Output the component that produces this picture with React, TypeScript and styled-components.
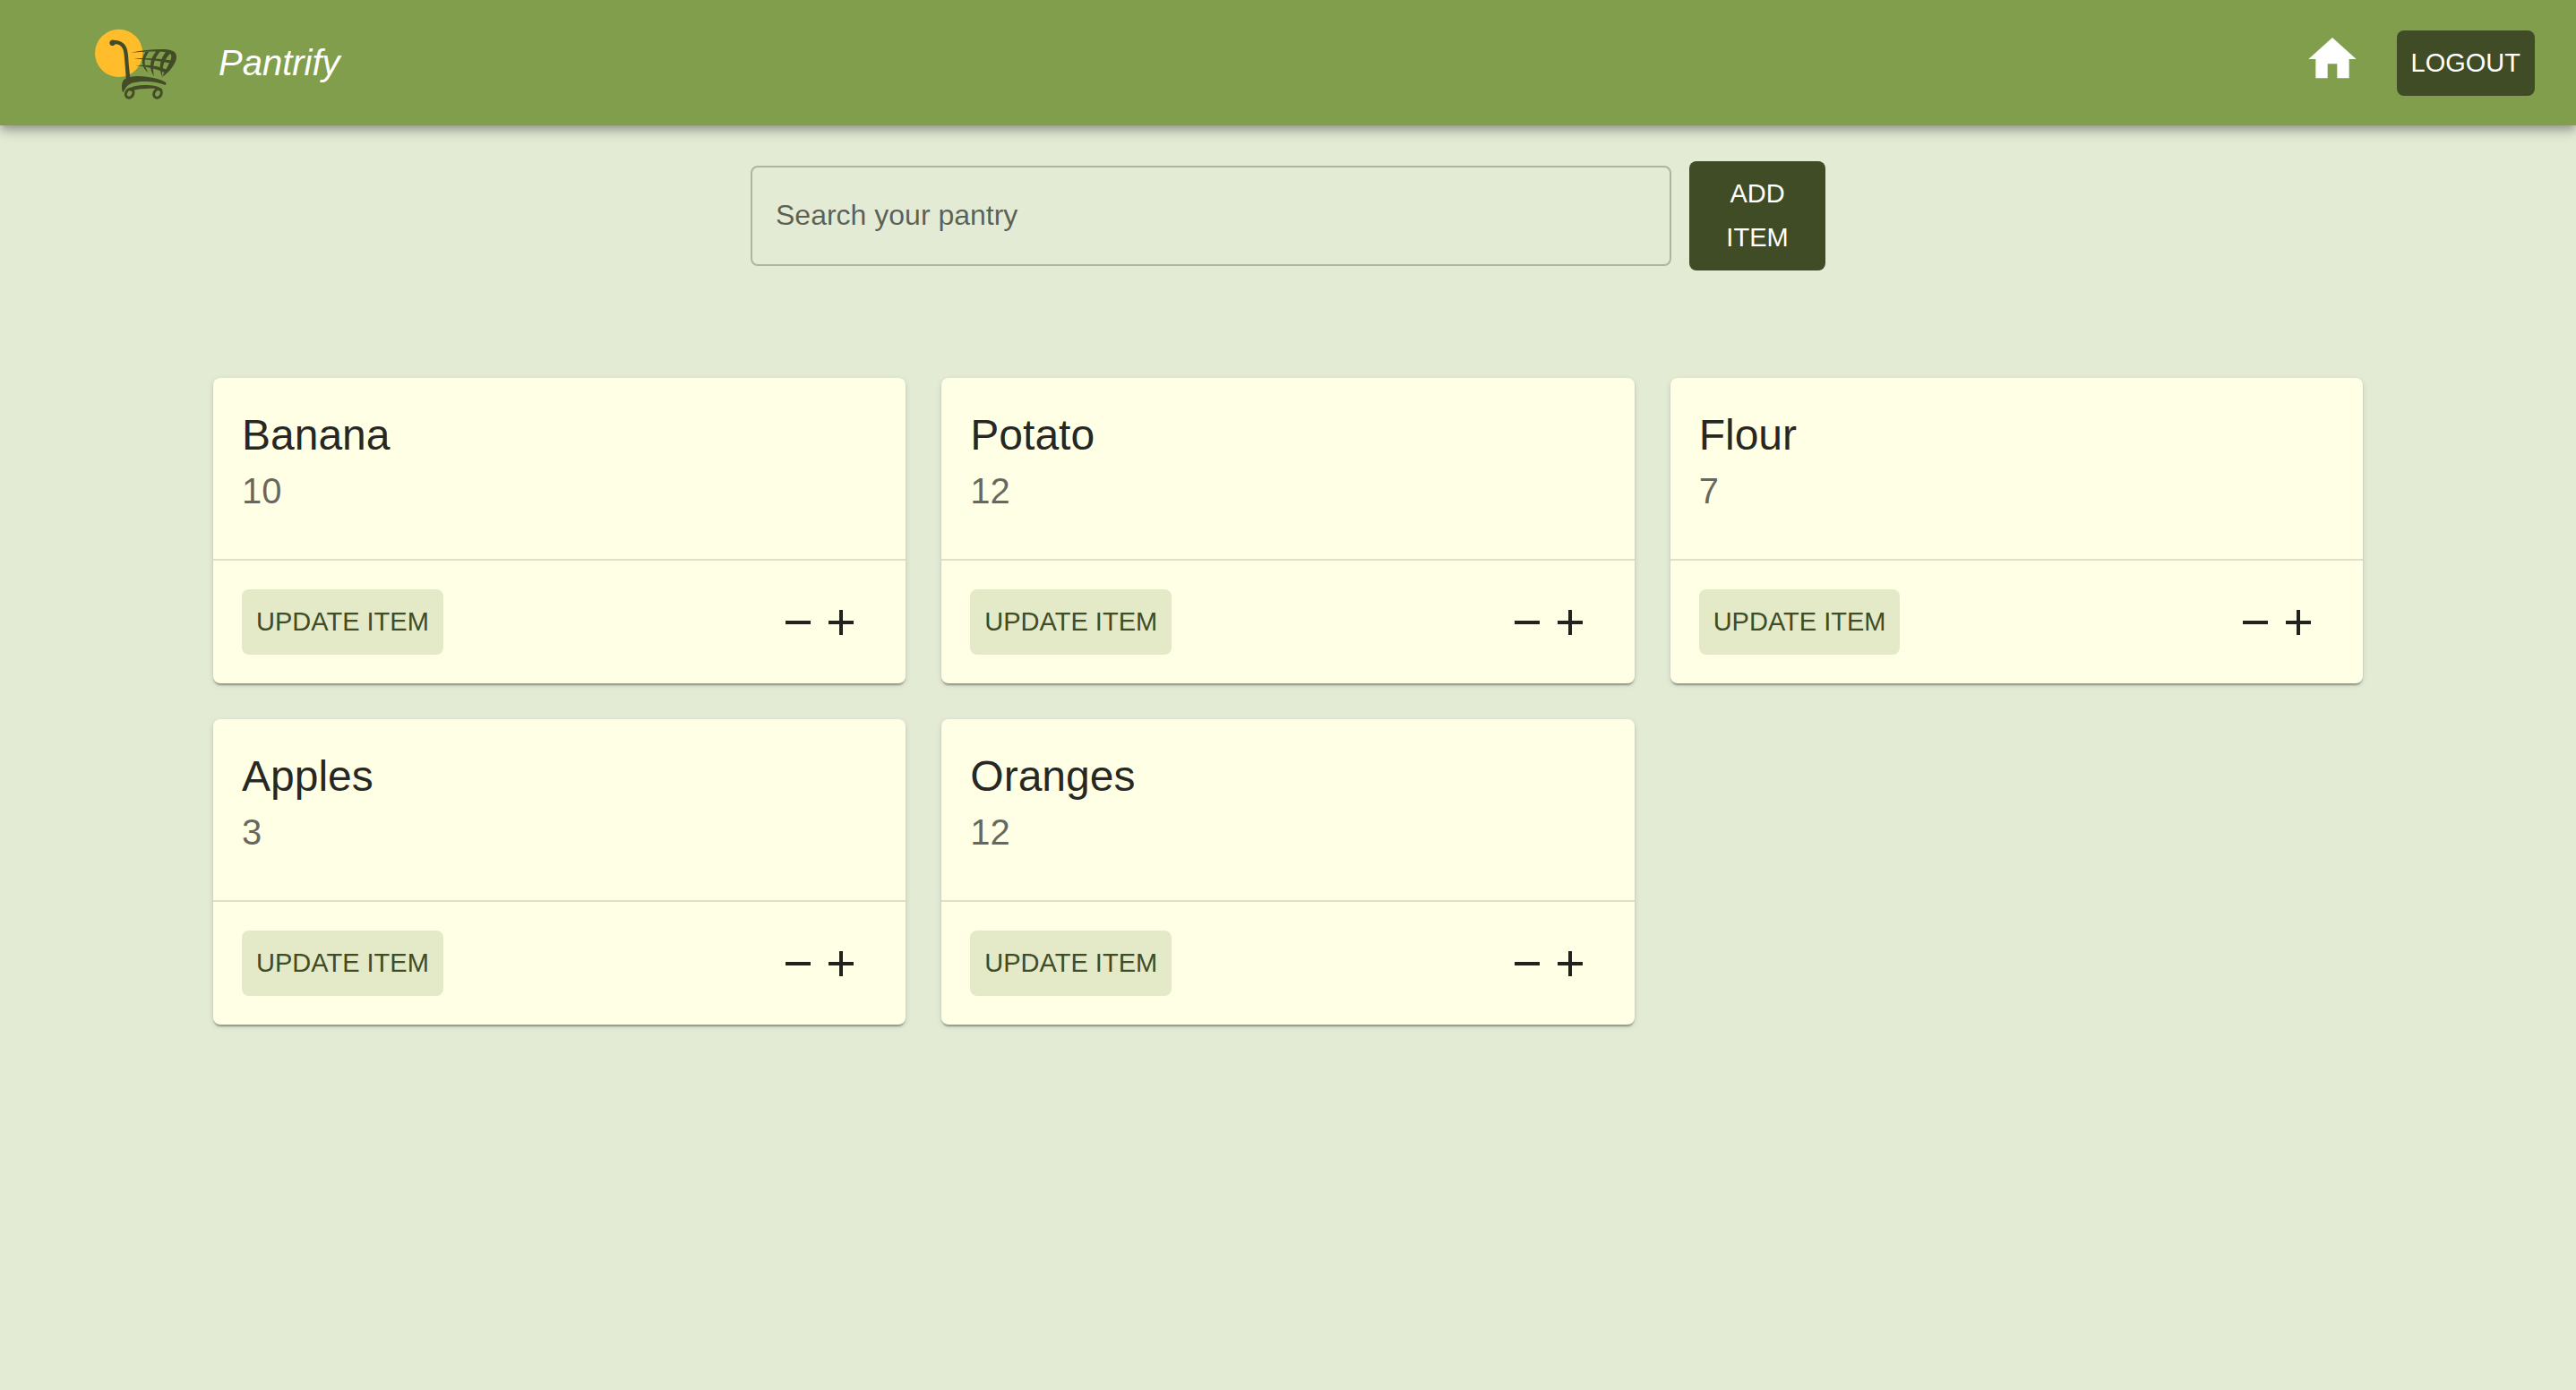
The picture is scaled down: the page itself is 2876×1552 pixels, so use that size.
import React, { useState } from "react";
import styled, { createGlobalStyle } from "styled-components";

const GlobalStyle = createGlobalStyle`
  *, *::before, *::after { box-sizing: border-box; }
  body {
    margin: 0;
    min-height: 100vh;
    background: #e3ebd5;
    color: rgba(0, 0, 0, 0.87);
    font-family: Helvetica, "Liberation Sans", Arial, sans-serif;
  }
`;

const Header = styled.header`
  display: flex;
  align-items: center;
  height: 140px;
  padding: 0 46px 0 106px;
  background: #819e4c;
  color: #fff;
  box-shadow:
    0 4px 8px -2px rgba(0, 0, 0, 0.2),
    0 8px 10px rgba(0, 0, 0, 0.14),
    0 2px 20px rgba(0, 0, 0, 0.12);
`;

const Brand = styled.h1`
  flex: 1;
  margin: 0 0 0 46px;
  font-size: 40px;
  line-height: 64px;
  font-style: italic;
  font-weight: 400;
`;

const HomeLink = styled.a`
  display: block;
  margin-right: 40px;
  padding-bottom: 8px;
  color: inherit;

  svg { display: block; }
`;

const Button = styled.button<{ $tone?: "dark" | "soft"; $wide?: boolean }>`
  padding: 12px ${(p) => (p.$wide ? 32 : 16)}px;
  border: 0;
  border-radius: 8px;
  background: ${(p) => (p.$tone === "soft" ? "#e4eac8" : "#3f4c25")};
  color: ${(p) => (p.$tone === "soft" ? "#3f4c25" : "#fff")};
  font-family: inherit;
  font-size: 29px;
  line-height: 49px;
  text-transform: uppercase;
  cursor: pointer;
`;

const Main = styled.main`
  display: flex;
  flex-direction: column;
  align-items: center;
  gap: 120px;
  padding: 40px 48px;
`;

const SearchBar = styled.form`
  display: grid;
  grid-template-columns: 1fr 152px;
  align-items: center;
  gap: 20px;
  width: 100%;
  max-width: 1200px;
`;

const SearchInput = styled.input`
  width: 100%;
  min-width: 0;
  height: 112px;
  padding: 0 26px 2px;
  border: 2px solid rgba(0, 0, 0, 0.23);
  border-radius: 8px;
  background: transparent;
  color: inherit;
  font-family: inherit;
  font-size: 32px;

  &::placeholder {
    color: rgba(0, 0, 0, 0.6);
    opacity: 1;
  }
`;

const CardGrid = styled.ul`
  display: grid;
  grid-template-columns: repeat(3, 1fr);
  gap: 40px;
  width: 100%;
  max-width: 2400px;
  margin: 0;
  padding: 0;
  list-style: none;
`;

const Card = styled.li`
  border-radius: 8px;
  background: #ffffe5;
  box-shadow:
    0 4px 2px -2px rgba(0, 0, 0, 0.2),
    0 2px 2px rgba(0, 0, 0, 0.14),
    0 2px 6px rgba(0, 0, 0, 0.12);
`;

const CardBody = styled.div`
  padding: 32px 32px 46px;
  border-bottom: 2px solid rgba(0, 0, 0, 0.12);
`;

const ItemName = styled.h2`
  margin: 0;
  font-size: 48px;
  line-height: 64px;
  font-weight: 400;
`;

const ItemCount = styled.p`
  margin: 0;
  color: rgba(0, 0, 0, 0.6);
  font-size: 40px;
  line-height: 60px;
`;

const CardActions = styled.div`
  display: flex;
  align-items: center;
  justify-content: space-between;
  padding: 32px 48px 32px 32px;
`;

const Stepper = styled.div`
  display: flex;
`;

const IconButton = styled.button`
  padding: 0;
  border: 0;
  background: none;
  color: inherit;
  cursor: pointer;

  svg { display: block; }
`;

function Icon({ size, d }: { size: number; d: string }) {
  return (
    <svg width={size} height={size} viewBox="0 0 24 24" fill="currentColor" aria-hidden="true">
      <path d={d} />
    </svg>
  );
}

const HOME = "M10 20v-6h4v6h5v-8h3L12 3 2 12h3v8z";
const MINUS = "M19 13H5v-2h14v2z";
const PLUS = "M19 13h-6v6h-2v-6H5v-2h6V5h2v6h6v2z";

function Logo() {
  return (
    <svg width="92" height="82" viewBox="48 27 276 246" role="img" aria-label="Shopping cart">
      <circle cx="128" cy="118" r="80" fill="#ffbd2b" />
      <g fill="#434c26">
        {/* handle */}
        <path d="M97 84c0-7 6-11 13-10c20 0 36 8 43 24c6 14 7 34 8 54l5 50l-13 8c-2-24-3-40-5-62c-2-24-2-40-11-51c-6-7-14-10-21-9c-4 8-19 7-19-4z" />
        {/* chassis */}
        <path d="M141 250c-6-22-3-39 8-46c22-12 50-10 77-6c26 3 48 10 60 19c1 3 0 6-2 8c-22-9-42-11-64-12c-34-1-58 5-68 20c-4 6-5 11-11 17z" />
        <path d="M155 239c18-10 38-14 58-14c26 0 51 3 63 17c-20-6-40-6-57-5c-22 0-38 3-49 9z" />
      </g>
      <g fill="none" stroke="#434c26">
        {/* wheels */}
        <ellipse cx="164" cy="253" rx="12" ry="15" strokeWidth="9" transform="rotate(28 164 253)" />
        <ellipse cx="258" cy="253" rx="12" ry="15" strokeWidth="9" transform="rotate(28 258 253)" />
      </g>
      {/* basket */}
      <g fill="#434c26">
        <path d="M168 116c36-7 76-12 113-11c25 1 41 9 40 27c-1 22-23 48-48 67c6-17 14-28 20-40c9-15 15-32 7-39c-16-10-68-8-132-4z" />
        <path d="M178 136c42-3 88 0 129 7l-4 9c-42-9-81-12-125-16z" />
        <path d="M184 160c38-5 76 0 106 14l-7 10c-28-13-62-21-99-24z" />
        <path d="M218 113l12-1c-20 26-20 46-3 72c-25-20-26-47-9-71z" />
        <path d="M254 110l14 0c-25 30-28 56-22 86c-18-26-16-57 8-86z" />
        <path d="M290 109l15 6c-24 22-31 41-32 82c-14-32-6-63 17-88z" />
      </g>
    </svg>
  );
}

const initialItems = [
  { name: "Banana", count: 10 },
  { name: "Potato", count: 12 },
  { name: "Flour", count: 7 },
  { name: "Apples", count: 3 },
  { name: "Oranges", count: 12 },
];

export default function App() {
  const [items, setItems] = useState(initialItems);
  const [query, setQuery] = useState("");

  const change = (name: string, by: number) =>
    setItems((list) =>
      list.map((it) => (it.name === name ? { ...it, count: Math.max(0, it.count + by) } : it)),
    );

  const shown = items.filter((it) => it.name.toLowerCase().includes(query.toLowerCase()));

  return (
    <>
      <GlobalStyle />
      <Header>
        <Logo />
        <Brand>Pantrify</Brand>
        <HomeLink href="#" aria-label="Home">
          <Icon size={64} d={HOME} />
        </HomeLink>
        <Button type="button">Logout</Button>
      </Header>
      <Main>
        <SearchBar onSubmit={(e) => e.preventDefault()}>
          <SearchInput
            type="text"
            aria-label="Search your pantry"
            placeholder="Search your pantry"
            value={query}
            onChange={(e) => setQuery(e.target.value)}
          />
          <Button type="button" $wide>
            Add Item
          </Button>
        </SearchBar>
        <CardGrid>
          {shown.map((it) => (
            <Card key={it.name}>
              <CardBody>
                <ItemName>{it.name}</ItemName>
                <ItemCount>{it.count}</ItemCount>
              </CardBody>
              <CardActions>
                <Button type="button" $tone="soft">
                  Update Item
                </Button>
                <Stepper>
                  <IconButton
                    type="button"
                    aria-label={`Remove one ${it.name}`}
                    onClick={() => change(it.name, -1)}
                  >
                    <Icon size={48} d={MINUS} />
                  </IconButton>
                  <IconButton
                    type="button"
                    aria-label={`Add one ${it.name}`}
                    onClick={() => change(it.name, 1)}
                  >
                    <Icon size={48} d={PLUS} />
                  </IconButton>
                </Stepper>
              </CardActions>
            </Card>
          ))}
        </CardGrid>
      </Main>
    </>
  );
}
